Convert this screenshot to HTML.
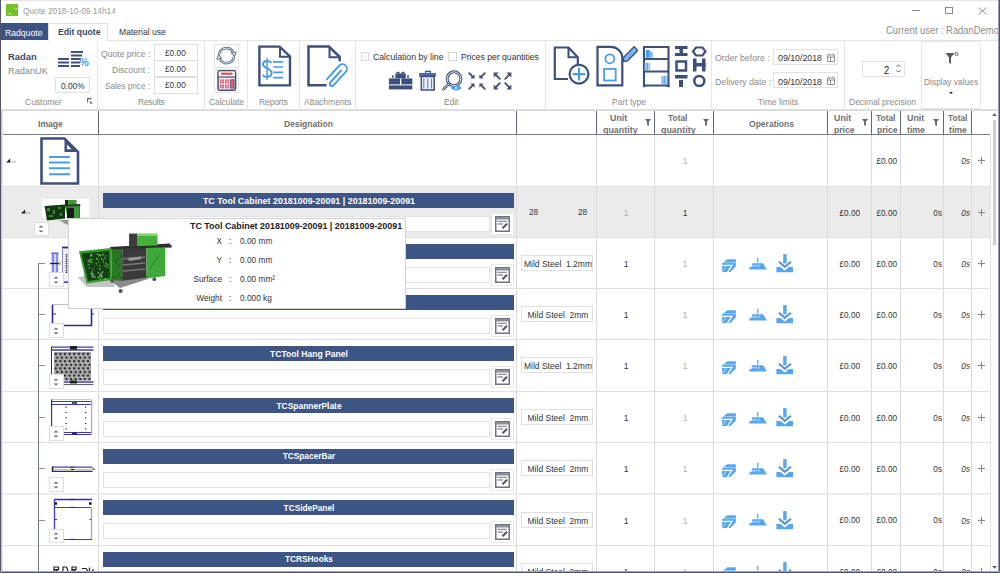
<!DOCTYPE html>
<html><head><meta charset="utf-8">
<style>
*{margin:0;padding:0;box-sizing:border-box}
html,body{width:1000px;height:573px;overflow:hidden;background:#fff;font-family:"Liberation Sans",sans-serif;color:#333}
.a{position:absolute}
.t{position:absolute;white-space:nowrap;font-size:8.5px;line-height:8.5px}
.lb{color:#8a8a8a}
.sep{position:absolute;top:41px;width:1px;height:68px;background:#e6e6e6}
.box{position:absolute;border:1px solid #dedede;background:#fff}
.gtl{position:absolute;top:96.5px;white-space:nowrap;font-size:9.52px;line-height:9.52px;color:#8a8a8a;transform:scaleX(0.8929);transform-origin:0 0}
</style></head><body>
<!-- window borders -->
<div class="a" style="left:0;top:0;width:1000px;height:1px;background:#e6e2ee"></div>

<!-- title -->
<svg class="a" style="left:6px;top:4px" width="12" height="12"><rect width="12" height="12" fill="#72c224"/><path d="M8 3.5L9.5 5.5L11 4M2 10L4 9L6 11" stroke="#c8f0a0" stroke-width="1" fill="none"/></svg>
<div class="t" style="left:23px;top:6.74px;font-size:9.30px;line-height:9.30px;color:#9a9a9a;transform:scaleX(0.8929);transform-origin:0 0">Quote 2018-10-09 14h14</div>
<div class="a" style="left:912px;top:10px;width:8px;height:1px;background:#888"></div>
<div class="a" style="left:945px;top:7px;width:8px;height:7px;border:1px solid #888"></div>
<svg class="a" style="left:978px;top:6.5px" width="9" height="8"><path d="M0.5 0.5L8.5 7.5M8.5 0.5L0.5 7.5" stroke="#888" stroke-width="0.9"/></svg>

<!-- tabs -->
<div class="a" style="left:0;top:23px;width:48px;height:17px;background:#3b5283"></div>
<div class="t" style="left:5px;top:27.73px;font-size:9.69px;line-height:9.69px;color:#fff;transform:scaleX(0.8929);transform-origin:0 0">Radquote</div>
<div class="a" style="left:48px;top:23px;width:60px;height:18px;border:1px solid #e0e0e0;border-bottom:none;background:#fff"></div>
<div class="t" style="left:57.5px;top:27.23px;font-size:9.74px;line-height:9.74px;color:#3b465e;font-weight:bold;transform:scaleX(0.8929);transform-origin:0 0">Edit quote</div>
<div class="t" style="left:118.8px;top:27.23px;font-size:9.63px;line-height:9.63px;color:#333;transform:scaleX(0.8929);transform-origin:0 0">Material use</div>
<div class="t" style="left:885.5px;top:25.3px;font-size:10.54px;line-height:10.54px;color:#8c8c8c;transform:scaleX(0.8929);transform-origin:0 0">Current user : RadanDemo</div>

<!-- ribbon -->
<div class="a" style="left:108px;top:40px;width:892px;height:1px;background:#e4e4e4"></div>
<div class="a" style="left:0;top:109px;width:1000px;height:2px;background:#dcdcdc"></div>
<div class="sep" style="left:97px"></div>
<div class="sep" style="left:204px"></div>
<div class="sep" style="left:247px"></div>
<div class="sep" style="left:299px"></div>
<div class="sep" style="left:355px"></div>
<div class="sep" style="left:545px"></div>
<div class="sep" style="left:711px"></div>
<div class="sep" style="left:844px"></div>

<!-- Customer -->
<div class="t" style="left:8px;top:51.8px;font-size:9.9px;line-height:9.9px;color:#3d4a6b;font-weight:bold;transform:scaleX(0.95);transform-origin:0 0">Radan</div>
<div class="t" style="left:8px;top:65.9px;font-size:9.9px;line-height:9.9px;color:#8a8a8a;transform:scaleX(0.93);transform-origin:0 0">RadanUK</div>
<svg class="a" style="left:57px;top:50px" width="33" height="19">
<g fill="#3d4f7c"><rect x="1" y="8" width="11" height="2"/><rect x="1" y="11.5" width="11" height="2"/><rect x="1" y="15" width="11" height="2"/>
<rect x="14" y="1" width="12" height="2"/><rect x="14" y="4.5" width="11" height="2"/><rect x="14" y="8" width="10" height="2"/><rect x="14" y="11.5" width="9" height="2"/><rect x="14" y="15" width="9" height="2"/></g>
<text x="22.5" y="15.5" font-family="Liberation Sans" font-size="10.5" font-weight="bold" fill="#4a9be8">%</text>
</svg>
<div class="box" style="left:55px;top:77px;width:34.5px;height:16px"></div>
<div class="t" style="left:60.7px;top:81.84px;font-size:9.30px;line-height:9.30px;color:#333;transform:scaleX(0.8929);transform-origin:0 0">0.00%</div>
<div class="gtl" style="left:25px">Customer</div>
<svg class="a" style="left:87px;top:98px" width="7" height="6"><path d="M0.6 4.5V0.6H4.5" stroke="#666" fill="none" stroke-width="1.1"/><path d="M2.5 2.5L5.8 5.6H3.2V3.5Z" fill="#333"/></svg>

<!-- Results -->
<div class="t lb" style="left:100.6px;top:49.03px;font-size:9.63px;line-height:9.63px;transform:scaleX(0.8929);transform-origin:0 0">Quote price :</div>
<div class="t lb" style="left:112.3px;top:64.84px;font-size:9.52px;line-height:9.52px;transform:scaleX(0.8929);transform-origin:0 0">Discount :</div>
<div class="t lb" style="left:105px;top:81.84px;font-size:9.18px;line-height:9.18px;transform:scaleX(0.8929);transform-origin:0 0">Sales price :</div>
<div class="box" style="left:154px;top:43.5px;width:44px;height:17px"></div>
<div class="box" style="left:154px;top:60px;width:44px;height:17px"></div>
<div class="box" style="left:154px;top:76.5px;width:44px;height:17px"></div>
<div class="t" style="left:165.4px;top:49.04px;font-size:9.30px;line-height:9.30px;transform:scaleX(0.8929);transform-origin:0 0">£0.00</div>
<div class="t" style="left:165.4px;top:65.14px;font-size:9.30px;line-height:9.30px;transform:scaleX(0.8929);transform-origin:0 0">£0.00</div>
<div class="t" style="left:165.4px;top:81.44px;font-size:9.30px;line-height:9.30px;transform:scaleX(0.8929);transform-origin:0 0">£0.00</div>
<div class="gtl" style="left:137.9px;letter-spacing:-0.28px">Results</div>

<!-- Calculate -->
<div class="box" style="left:214px;top:43.5px;width:25px;height:24px;border-color:#e4e4e4"></div>
<div class="box" style="left:214px;top:68.5px;width:25px;height:24.5px;border-color:#e4e4e4"></div>
<svg class="a" style="left:215px;top:46px" width="23" height="20" viewBox="0 0 23 20">
<path d="M4.02 8.28A7.6 7.6 0 0 1 18.2 6.2" stroke="#56648a" stroke-width="2.6" fill="none"/>
<path d="M4.02 8.28A7.6 7.6 0 0 1 18.2 6.2" stroke="#dfe4ee" stroke-width="1" fill="none"/>
<path d="M18.98 10.92A7.6 7.6 0 0 1 4.8 13" stroke="#56648a" stroke-width="2.6" fill="none"/>
<path d="M18.98 10.92A7.6 7.6 0 0 1 4.8 13" stroke="#dfe4ee" stroke-width="1" fill="none"/>
<path d="M15.6 6.6L21.8 5.4L19.6 11.6Z" fill="#56648a"/><path d="M17 7L20.6 6.4L19.4 9.8Z" fill="#dfe4ee"/>
<path d="M7.4 12.4L1.2 13.6L3.4 7.4Z" fill="#56648a"/><path d="M6 12L2.4 12.6L3.6 9.2Z" fill="#dfe4ee"/>
</svg>
<svg class="a" style="left:216.5px;top:70.3px" width="20" height="21" viewBox="0 0 20 21">
<rect x="1" y="0.8" width="17.6" height="19.4" rx="1.6" stroke="#3d4f7c" stroke-width="1.5" fill="#fbe6e8"/>
<rect x="1.8" y="1.6" width="16" height="5.2" fill="#fff"/>
<rect x="4" y="2.6" width="11.5" height="2.3" fill="#e0566a"/>
<path d="M1 7H18.6" stroke="#3d4f7c" stroke-width="1.2"/>
<g fill="#e86070"><rect x="2.8" y="9.5" width="4.2" height="3.8"/><rect x="8" y="9.5" width="4.2" height="3.8"/><rect x="2.8" y="14.5" width="4.2" height="3.8"/><rect x="8" y="14.5" width="4.2" height="3.8"/></g>
<g fill="#fff"><rect x="4.2" y="10.7" width="1.4" height="1.4"/><rect x="9.4" y="10.7" width="1.4" height="1.4"/><rect x="4.2" y="15.7" width="1.4" height="1.4"/><rect x="9.4" y="15.7" width="1.4" height="1.4"/></g>
<rect x="13.7" y="9.8" width="3.3" height="8.3" stroke="#3d4f7c" stroke-width="0.9" fill="#e86070"/>
</svg>
<div class="gtl" style="left:208.9px;letter-spacing:-0.06px">Calculate</div>

<!-- Reports -->
<svg class="a" style="left:257px;top:45px" width="36" height="43" viewBox="0 0 36 43">
<path d="M22.7 1.6H2.4V40.4H33V11.5Z" stroke="#3d4f7c" stroke-width="2.4" fill="#fff" stroke-linejoin="miter"/>
<path d="M23 1.6V11.8H33" stroke="#3d4f7c" stroke-width="2" fill="none"/>
<path d="M14.6 18C13 15.2 6.2 15 6 19.2C5.8 23.6 14.6 22.6 14.6 28C14.6 33 7.2 32.6 5.6 30" stroke="#4a9be8" stroke-width="2" fill="none"/>
<path d="M10.1 13V35" stroke="#4a9be8" stroke-width="1.5"/>
<path d="M16.2 16.9H26.2M16.2 22H26.2M16.2 27.4H26.2M16.2 32.6H26.2" stroke="#4a9be8" stroke-width="1.7"/>
</svg>
<div class="gtl" style="left:258.8px;letter-spacing:-0.13px">Reports</div>

<!-- Attachments -->
<svg class="a" style="left:306px;top:45px" width="44" height="43" viewBox="0 0 44 43">
<path d="M20.6 40.2H2.5V1.5H22.8L33.7 11.8V16.2" stroke="#3d4f7c" stroke-width="2.5" fill="none" stroke-linejoin="miter"/>
<path d="M23.5 1.4V12.3H33.7" stroke="#3d4f7c" stroke-width="2" fill="none"/>
<g transform="translate(31 29) rotate(42)"><path d="M-4 11.5V-7.5A4.5 4.5 0 0 1 5 -7.5V10.8A2.15 2.15 0 0 1 0.7 10.8V-6" stroke="#4a9be8" stroke-width="1.9" fill="none"/></g>
</svg>
<div class="gtl" style="left:303.8px">Attachments</div>

<!-- Edit -->
<div class="box" style="left:360.5px;top:52px;width:8.5px;height:8.5px;border-color:#d8d8d8"></div>
<div class="t" style="left:373.1px;top:52.43px;font-size:9.74px;line-height:9.74px;transform:scaleX(0.8929);transform-origin:0 0">Calculation by line</div>
<div class="box" style="left:448.2px;top:52px;width:8.5px;height:8.5px;border-color:#d8d8d8"></div>
<div class="t" style="left:460.9px;top:52.43px;font-size:9.63px;line-height:9.63px;transform:scaleX(0.8929);transform-origin:0 0">Prices per quantities</div>
<svg class="a" style="left:388px;top:71px" width="26" height="19" viewBox="0 0 26 19">
<g fill="#3d4f7c"><rect x="8.5" y="0.8" width="3" height="1.6"/><rect x="13.5" y="0.8" width="3" height="1.6"/><rect x="7.4" y="2.4" width="10.4" height="5"/>
<rect x="0.9" y="7.4" width="11.1" height="6"/><rect x="13.3" y="7.4" width="11" height="6"/><rect x="0.9" y="14.4" width="23.4" height="4"/></g>
<rect x="4" y="4.5" width="2" height="2" fill="#3d4f7c"/><rect x="19" y="4.5" width="2" height="2" fill="#3d4f7c"/>
</svg>
<svg class="a" style="left:418px;top:70px" width="19" height="21" viewBox="0 0 19 21">
<path d="M7.5 3.2V1.4H12.4V3.2" stroke="#3d4f7c" stroke-width="1.1" fill="#e4ecf8"/>
<rect x="1.6" y="3.3" width="16" height="3" fill="#4a6cae" stroke="#3d4f7c" stroke-width="0.6"/>
<path d="M3.3 6.6H16.2V20.1H3.3Z" stroke="#3d4f7c" stroke-width="1.5" fill="#eef3fb"/>
<path d="M5.8 8.5V18.5M9.75 8.5V18.5M13.5 8.5V18.5" stroke="#6f86b8" stroke-width="1.2"/>
</svg>
<svg class="a" style="left:441px;top:69px" width="23" height="23" viewBox="0 0 23 23">
<circle cx="13" cy="9.75" r="6.9" stroke="#3d4f7c" stroke-width="3" fill="#fff"/>
<circle cx="13" cy="9.75" r="6.9" stroke="#e8ecf4" stroke-width="1" fill="none"/>
<path d="M8.2 14.6L2.5 20.2" stroke="#3d4f7c" stroke-width="2.6" stroke-linecap="round"/>
<path d="M8.2 14.6L2.5 20.2" stroke="#f0f2f8" stroke-width="1" stroke-linecap="round"/>
<path d="M10 19C12.2 15.8 18.2 15.8 20.5 19C18.2 22.2 12.2 22.2 10 19Z" fill="#4a9be8"/>
<circle cx="15.2" cy="19" r="1.5" fill="#a8d4fa"/>
</svg>
<svg class="a" style="left:468px;top:72px" width="18" height="18" viewBox="0 0 18 18">
<g stroke="#465272" stroke-width="1.9" stroke-linecap="round"><path d="M1.2 1.2L5 5"/><path d="M16.8 1.2L13 5"/><path d="M1.2 16.8L5 13"/><path d="M16.8 16.8L13 13"/></g>
<g fill="#465272"><path d="M6.6 2.4V6.6H2.4Z"/><path d="M11.4 2.4V6.6H15.6Z"/><path d="M6.6 15.6V11.4H2.4Z"/><path d="M11.4 15.6V11.4H15.6Z"/></g>
</svg>
<svg class="a" style="left:492.5px;top:72px" width="19" height="18" viewBox="0 0 19 18">
<g stroke="#465272" stroke-width="1.9" stroke-linecap="round"><path d="M2.5 2.5L6.8 6.8"/><path d="M16.5 2.5L12.2 6.8"/><path d="M2.5 15.5L6.8 11.2"/><path d="M16.5 15.5L12.2 11.2"/></g>
<g fill="#465272"><path d="M0.6 0.6H5.6L0.6 5.6Z"/><path d="M18.4 0.6H13.4L18.4 5.6Z"/><path d="M0.6 17.4H5.6L0.6 12.4Z"/><path d="M18.4 17.4H13.4L18.4 12.4Z"/></g>
</svg>
<div class="gtl" style="left:444.3px;letter-spacing:-0.14px">Edit</div>

<!-- Part type -->
<svg class="a" style="left:553px;top:46px" width="37" height="40" viewBox="0 0 37 40">
<path d="M15 33H1.8V1.5H15.5L24.8 11.2V19" stroke="#3d4f7c" stroke-width="2.2" fill="none" stroke-linejoin="miter"/>
<path d="M15.5 1.5V11.2H24.8" stroke="#3d4f7c" stroke-width="2" fill="none"/>
<circle cx="26" cy="28.2" r="9.4" stroke="#3d4f7c" stroke-width="2.2" fill="#fff"/>
<path d="M26 21.8V34.6M19.6 28.2H32.4" stroke="#4a9be8" stroke-width="2.2"/>
</svg>
<svg class="a" style="left:596px;top:45px" width="42" height="43" viewBox="0 0 42 43">
<path d="M1.5 1.9H14.7A11.6 11 0 0 1 26.3 12.5V40.3H1.5Z" stroke="#3d4f7c" stroke-width="2.2" fill="#fff"/>
<circle cx="13.9" cy="13.8" r="4.5" stroke="#4a9be8" stroke-width="1.8" fill="none"/>
<rect x="8.1" y="23.9" width="11.6" height="11.6" stroke="#4a9be8" stroke-width="1.8" fill="none"/>
<g transform="translate(34.3 9.3) rotate(45)"><path d="M-2.6 -8V6.5L0 10L2.6 6.5V-8Z" stroke="#3d4f7c" stroke-width="1.4" fill="#8cc0f0"/><path d="M-0.9 -7V6M0.9 -7V6" stroke="#4a9be8" stroke-width="0.7"/></g>
</svg>
<svg class="a" style="left:642px;top:46px" width="29" height="42" viewBox="0 0 29 42">
<path d="M2 1H26.5V39.5H2Z" stroke="#3d4f7c" stroke-width="2.1" fill="#fff"/>
<path d="M2 13H26.5M2 25.5H26.5" stroke="#3d4f7c" stroke-width="2"/>
<rect x="1" y="39" width="2.6" height="2.2" fill="#3d4f7c"/><rect x="25" y="39" width="2.6" height="2.2" fill="#3d4f7c"/>
<rect x="4" y="4" width="3.8" height="7.8" fill="#4a9be8"/><rect x="7.8" y="5.5" width="2.8" height="6.3" fill="#7ab6ee"/>
<rect x="2.4" y="17" width="1.5" height="7.4" fill="#7ab6ee"/><rect x="4.4" y="17" width="1.5" height="7.4" fill="#4a9be8"/><rect x="6.4" y="17" width="1.4" height="7.4" fill="#7ab6ee"/>
<rect x="19.4" y="30" width="1.5" height="8.4" fill="#7ab6ee"/><rect x="21.4" y="30" width="1.5" height="8.4" fill="#4a9be8"/><rect x="23.4" y="30" width="1.4" height="8.4" fill="#7ab6ee"/>
</svg>
<svg class="a" style="left:675px;top:46px" width="13" height="41" viewBox="0 0 13 41">
<g fill="#3d4f7c"><rect x="0" y="0" width="12.5" height="3"/><rect x="4.5" y="2" width="3.5" height="6"/><rect x="0" y="7" width="12.5" height="3"/>
<rect x="4" y="34" width="4" height="7"/><rect x="0" y="29" width="12.5" height="3.5"/></g>
<rect x="1.5" y="15.5" width="9.5" height="9" stroke="#3d4f7c" stroke-width="2.5" fill="none"/>
</svg>
<svg class="a" style="left:692px;top:46px" width="15" height="41" viewBox="0 0 15 41">
<path d="M4 1.5H10.5L13.5 5.5L10.5 9.5H4L1 5.5Z" stroke="#3d4f7c" stroke-width="2.2" fill="none"/>
<g fill="#3d4f7c"><rect x="1" y="12.5" width="3.5" height="13"/><rect x="10" y="12.5" width="3.5" height="13"/><rect x="1" y="17" width="12.5" height="3.5"/></g>
<circle cx="7.3" cy="35" r="5" stroke="#3d4f7c" stroke-width="2.5" fill="none"/>
</svg>
<div class="gtl" style="left:611.8px">Part type</div>

<!-- Time limits -->
<div class="t lb" style="left:714.8px;top:53.13px;font-size:9.86px;line-height:9.86px;transform:scaleX(0.8929);transform-origin:0 0">Order before :</div>
<div class="t lb" style="left:714.8px;top:76.53px;font-size:9.86px;line-height:9.86px;transform:scaleX(0.8929);transform-origin:0 0">Delivery date :</div>
<div class="box" style="left:773px;top:48.5px;width:64.5px;height:16px;border-color:#e2e2e2"></div>
<div class="box" style="left:773px;top:72.3px;width:64.5px;height:15.5px;border-color:#e2e2e2"></div>
<div class="t" style="left:777.6px;top:53.13px;font-size:9.86px;line-height:9.86px;transform:scaleX(0.8929);transform-origin:0 0">09/10/2018</div>
<div class="t" style="left:777.6px;top:76.53px;font-size:9.86px;line-height:9.86px;transform:scaleX(0.8929);transform-origin:0 0">09/10/2018</div>
<svg class="a" style="left:827px;top:52.5px" width="8" height="9" viewBox="0 0 8 9"><path d="M0.5 2H7.5V8.5H0.5Z M0.5 4H7.5 M3.5 4V8.5 M2 0.5V2 M6 0.5V2" stroke="#777" stroke-width="0.8" fill="none"/></svg>
<svg class="a" style="left:827px;top:76px" width="8" height="9" viewBox="0 0 8 9"><path d="M0.5 2H7.5V8.5H0.5Z M0.5 4H7.5 M3.5 4V8.5 M2 0.5V2 M6 0.5V2" stroke="#777" stroke-width="0.8" fill="none"/></svg>
<div class="gtl" style="left:757.7px">Time limits</div>

<!-- Decimal precision -->
<div class="box" style="left:861.5px;top:60.5px;width:43.5px;height:16px;border-color:#e2e2e2"></div>
<div class="t" style="left:883.8px;top:64.82px;font-size:10.53px;line-height:10.53px;color:#222;transform:scaleX(0.8929);transform-origin:0 0">2</div>
<svg class="a" style="left:896px;top:63.5px" width="5" height="9"><path d="M0.5 2.8L2.5 0.8L4.5 2.8M0.5 6.2L2.5 8.2L4.5 6.2" stroke="#444" stroke-width="0.9" fill="none"/></svg>
<div class="gtl" style="left:848.8px">Decimal precision</div>

<!-- Display values -->
<div class="box" style="left:920.5px;top:41px;width:60px;height:67.5px;border-color:#e6e6e6"></div>
<svg class="a" style="left:945px;top:52px" width="14" height="13" viewBox="0 0 14 13"><path d="M0.5 1H9.5L6 5.5V12L4 10.5V5.5Z" fill="#4d5a70"/><circle cx="11.5" cy="2" r="1.5" stroke="#4d5a70" stroke-width="0.9" fill="none"/></svg>
<div class="t lb" style="left:924px;top:77.44px;font-size:9.41px;line-height:9.41px;transform:scaleX(0.8929);transform-origin:0 0">Display values</div>
<svg class="a" style="left:948.5px;top:92px" width="4" height="2"><path d="M0 0H4L2 2Z" fill="#222"/></svg>


<div class="a" style="left:1px;top:187px;width:989px;height:50px;background:#ebebeb"></div>
<div class="a" style="left:98px;top:134px;width:1px;height:439px;background:#dadada"></div>
<div class="a" style="left:516px;top:134px;width:1px;height:439px;background:#dadada"></div>
<div class="a" style="left:596px;top:134px;width:1px;height:439px;background:#dadada"></div>
<div class="a" style="left:654px;top:134px;width:1px;height:439px;background:#dadada"></div>
<div class="a" style="left:713px;top:134px;width:1px;height:439px;background:#dadada"></div>
<div class="a" style="left:827px;top:134px;width:1px;height:439px;background:#dadada"></div>
<div class="a" style="left:871px;top:134px;width:1px;height:439px;background:#dadada"></div>
<div class="a" style="left:900px;top:134px;width:1px;height:439px;background:#dadada"></div>
<div class="a" style="left:943px;top:134px;width:1px;height:439px;background:#dadada"></div>
<div class="a" style="left:971px;top:134px;width:1px;height:439px;background:#dadada"></div>
<div class="a" style="left:990px;top:134px;width:1px;height:439px;background:#e2e2e2"></div>
<div class="a" style="left:1px;top:186px;width:989px;height:1px;background:#dfdfdf"></div>
<div class="a" style="left:1px;top:237px;width:989px;height:1px;background:#dfdfdf"></div>
<div class="a" style="left:1px;top:288px;width:989px;height:1px;background:#dfdfdf"></div>
<div class="a" style="left:1px;top:339px;width:989px;height:1px;background:#dfdfdf"></div>
<div class="a" style="left:1px;top:391px;width:989px;height:1px;background:#dfdfdf"></div>
<div class="a" style="left:1px;top:442px;width:989px;height:1px;background:#dfdfdf"></div>
<div class="a" style="left:1px;top:493px;width:989px;height:2px;background:#ececec"></div>
<div class="a" style="left:1px;top:545px;width:989px;height:1px;background:#dfdfdf"></div>
<div class="a" style="left:98px;top:111px;width:1px;height:23px;background:#62667a"></div>
<div class="a" style="left:516px;top:111px;width:1px;height:23px;background:#62667a"></div>
<div class="a" style="left:596px;top:111px;width:1px;height:23px;background:#62667a"></div>
<div class="a" style="left:654px;top:111px;width:1px;height:23px;background:#62667a"></div>
<div class="a" style="left:713px;top:111px;width:1px;height:23px;background:#62667a"></div>
<div class="a" style="left:827px;top:111px;width:1px;height:23px;background:#62667a"></div>
<div class="a" style="left:871px;top:111px;width:1px;height:23px;background:#62667a"></div>
<div class="a" style="left:900px;top:111px;width:1px;height:23px;background:#62667a"></div>
<div class="a" style="left:943px;top:111px;width:1px;height:23px;background:#62667a"></div>
<div class="a" style="left:971px;top:111px;width:1px;height:23px;background:#62667a"></div>
<div class="a" style="left:1px;top:134px;width:989px;height:1px;background:#767c8e"></div>
<div class="t" style="left:38.2px;top:119.06px;font-size:9.63px;line-height:9.63px;color:#707070;transform:scaleX(0.8929);transform-origin:0 0;font-weight:bold">Image</div>
<div class="t" style="left:284.1px;top:118.87px;font-size:9.59px;line-height:9.59px;color:#707070;transform:scaleX(0.8929);transform-origin:0 0;font-weight:bold">Designation</div>
<div class="t" style="left:610px;top:113.01px;font-size:9.91px;line-height:9.91px;color:#707070;transform:scaleX(0.8929);transform-origin:0 0;font-weight:bold">Unit</div>
<div class="t" style="left:602.7px;top:124.61px;font-size:9.97px;line-height:9.97px;color:#707070;transform:scaleX(0.8929);transform-origin:0 0;font-weight:bold">quantity</div>
<div class="t" style="left:667.7px;top:113.09px;font-size:9.41px;line-height:9.41px;color:#707070;transform:scaleX(0.8929);transform-origin:0 0;font-weight:bold">Total</div>
<div class="t" style="left:661.3px;top:124.61px;font-size:9.97px;line-height:9.97px;color:#707070;transform:scaleX(0.8929);transform-origin:0 0;font-weight:bold">quantity</div>
<div class="t" style="left:748.6px;top:118.87px;font-size:9.56px;line-height:9.56px;color:#707070;transform:scaleX(0.8929);transform-origin:0 0;font-weight:bold">Operations</div>
<div class="t" style="left:834px;top:113.01px;font-size:9.91px;line-height:9.91px;color:#707070;transform:scaleX(0.8929);transform-origin:0 0;font-weight:bold">Unit</div>
<div class="t" style="left:834px;top:124.66px;font-size:9.63px;line-height:9.63px;color:#707070;transform:scaleX(0.8929);transform-origin:0 0;font-weight:bold">price</div>
<div class="t" style="left:875.7px;top:113.09px;font-size:9.41px;line-height:9.41px;color:#707070;transform:scaleX(0.8929);transform-origin:0 0;font-weight:bold">Total</div>
<div class="t" style="left:877px;top:124.66px;font-size:9.63px;line-height:9.63px;color:#707070;transform:scaleX(0.8929);transform-origin:0 0;font-weight:bold">price</div>
<div class="t" style="left:907px;top:113.01px;font-size:9.91px;line-height:9.91px;color:#707070;transform:scaleX(0.8929);transform-origin:0 0;font-weight:bold">Unit</div>
<div class="t" style="left:907px;top:124.63px;font-size:9.80px;line-height:9.80px;color:#707070;transform:scaleX(0.8929);transform-origin:0 0;font-weight:bold">time</div>
<div class="t" style="left:947.7px;top:113.09px;font-size:9.41px;line-height:9.41px;color:#707070;transform:scaleX(0.8929);transform-origin:0 0;font-weight:bold">Total</div>
<div class="t" style="left:949.2px;top:124.63px;font-size:9.80px;line-height:9.80px;color:#707070;transform:scaleX(0.8929);transform-origin:0 0;font-weight:bold">time</div>
<svg class="a" style="left:645px;top:118.5px" width="6" height="7" viewBox="0 0 6 7"><path d="M0 0H6L3.9 2.8V7L2.1 6V2.8Z" fill="#5e6470"/></svg>
<svg class="a" style="left:703px;top:118.5px" width="6" height="7" viewBox="0 0 6 7"><path d="M0 0H6L3.9 2.8V7L2.1 6V2.8Z" fill="#5e6470"/></svg>
<svg class="a" style="left:861.5px;top:118.5px" width="6" height="7" viewBox="0 0 6 7"><path d="M0 0H6L3.9 2.8V7L2.1 6V2.8Z" fill="#5e6470"/></svg>
<svg class="a" style="left:933px;top:118.5px" width="6" height="7" viewBox="0 0 6 7"><path d="M0 0H6L3.9 2.8V7L2.1 6V2.8Z" fill="#5e6470"/></svg>
<svg class="a" style="left:991px;top:112px" width="7" height="5"><path d="M1 4L3.5 1.2L6 4Z" fill="#606060"/></svg>
<div class="a" style="left:993px;top:120px;width:3px;height:125px;background:#cdcdcd"></div>
<svg class="a" style="left:991px;top:565px" width="7" height="5"><path d="M1 1L3.5 3.8L6 1Z" fill="#606060"/></svg>
<svg class="a" style="left:40px;top:136.5px" width="40" height="48" viewBox="0 0 40 48"><path d="M1.5 1.5H24.5L38 15V46.5H1.5Z" stroke="#3d4f7c" stroke-width="2.6" fill="#fff" stroke-linejoin="miter"/><path d="M24.5 1.5L38 15H24.5Z" fill="#3d4f7c"/><path d="M27 7.5L31.5 12.3H27Z" fill="#fff"/><g stroke="#4a9be8" stroke-width="2"><path d="M9 20H30M9 25.6H30M9 31.3H30M9 37.2H30"/></g></svg>
<svg class="a" style="left:6px;top:157.6px" width="11" height="5" viewBox="0 0 11 5"><path d="M0 4.6L4.2 0.6V4.6Z" fill="#1a1a1a"/><path d="M4.5 4H10" stroke="#888" stroke-width="0.9" stroke-dasharray="1.2 0.5"/></svg>
<svg class="a" style="left:20.5px;top:208.8px" width="11" height="5" viewBox="0 0 11 5"><path d="M0 4.6L4.2 0.6V4.6Z" fill="#1a1a1a"/><path d="M4.5 4H10" stroke="#888" stroke-width="0.9" stroke-dasharray="1.2 0.5"/></svg>
<div class="a" style="left:37.5px;top:263px;width:1px;height:310px;background:#6e7596"></div>
<div class="a" style="left:38px;top:263.0px;width:7px;height:1px;background:#8a90a8"></div>
<div class="a" style="left:38px;top:314.0px;width:7px;height:1px;background:#8a90a8"></div>
<div class="a" style="left:38px;top:365.0px;width:7px;height:1px;background:#8a90a8"></div>
<div class="a" style="left:38px;top:417.0px;width:7px;height:1px;background:#8a90a8"></div>
<div class="a" style="left:38px;top:468.0px;width:7px;height:1px;background:#8a90a8"></div>
<div class="a" style="left:38px;top:519.5px;width:7px;height:1px;background:#8a90a8"></div>
<div class="a" style="left:38px;top:571.0px;width:7px;height:1px;background:#8a90a8"></div>
<div class="a" style="left:103px;top:192.5px;width:411px;height:15px;background:#3d5585"></div>
<div class="t" style="left:158.5px;width:300px;text-align:center;top:196.01px;font-size:9.97px;line-height:9.97px;color:#fff;transform:scaleX(0.8929);transform-origin:50% 0;font-weight:bold">TC Tool Cabinet 20181009-20091 | 20181009-20091</div>
<div class="a" style="left:103px;top:215.6px;width:387px;height:16px;background:#fff;border:1px solid #e2e2e2"></div>
<div class="a" style="left:491.2px;top:213px;width:22.5px;height:22px;background:#fff;border:1px solid #e8e8e8"></div>
<svg class="a" style="left:494.8px;top:216px" width="15" height="16" viewBox="0 0 15 16"><rect x="0.75" y="0.75" width="13.5" height="14.5" stroke="#6e7480" stroke-width="1.5" fill="#fff"/><rect x="1" y="1" width="13" height="2.5" fill="#8a909a"/><path d="M2.5 5.3H11.8" stroke="#6e7480" stroke-width="1"/><path d="M2.5 8H8" stroke="#8a909a" stroke-width="1.4"/><path d="M7.5 12.2L12 7.8" stroke="#50586a" stroke-width="2.2"/></svg>
<div class="a" style="left:978px;top:212px;width:7px;height:1px;background:#858585"></div>
<div class="a" style="left:981px;top:209px;width:1px;height:7px;background:#858585"></div>
<div class="t" style="left:528.6px;top:207.93px;font-size:9.18px;line-height:9.18px;color:#333;transform:scaleX(0.8929);transform-origin:0 0">28</div>
<div class="t" style="left:577.6px;top:207.93px;font-size:9.18px;line-height:9.18px;color:#333;transform:scaleX(0.8929);transform-origin:0 0">28</div>
<div class="t" style="left:476.29999999999995px;width:300px;text-align:center;top:208.08px;font-size:9.52px;line-height:9.52px;color:#b0b0b0;transform:scaleX(0.8929);transform-origin:50% 0">1</div>
<div class="t" style="left:534.5px;width:300px;text-align:center;top:208.08px;font-size:9.52px;line-height:9.52px;color:#333;transform:scaleX(0.8929);transform-origin:50% 0">1</div>
<div class="t" style="left:560.4px;width:300px;text-align:right;top:208.53px;font-size:9.18px;line-height:9.18px;color:#333;transform:scaleX(0.8929);transform-origin:100% 0">£0.00</div>
<div class="t" style="left:596.8px;width:300px;text-align:right;top:208.53px;font-size:9.18px;line-height:9.18px;color:#333;transform:scaleX(0.8929);transform-origin:100% 0">£0.00</div>
<div class="t" style="left:641.6px;width:300px;text-align:right;top:208.53px;font-size:9.18px;line-height:9.18px;color:#333;transform:scaleX(0.8929);transform-origin:100% 0">0s</div>
<div class="t" style="left:670px;width:300px;text-align:right;top:209.13px;font-size:9.18px;line-height:9.18px;color:#333;transform:scaleX(0.8929);transform-origin:100% 0;font-style:italic">0s</div>
<div class="a" style="left:103px;top:243.5px;width:411px;height:15px;background:#3d5585"></div>
<div class="t" style="left:158.5px;width:300px;text-align:center;top:247.11px;font-size:9.30px;line-height:9.30px;color:#fff;transform:scaleX(0.8929);transform-origin:50% 0;font-weight:bold">TC Tool Cabinet</div>
<div class="a" style="left:103px;top:266.6px;width:387px;height:16px;background:#fff;border:1px solid #e2e2e2"></div>
<div class="a" style="left:491.2px;top:264px;width:22.5px;height:22px;background:#fff;border:1px solid #e8e8e8"></div>
<svg class="a" style="left:494.8px;top:267px" width="15" height="16" viewBox="0 0 15 16"><rect x="0.75" y="0.75" width="13.5" height="14.5" stroke="#6e7480" stroke-width="1.5" fill="#fff"/><rect x="1" y="1" width="13" height="2.5" fill="#8a909a"/><path d="M2.5 5.3H11.8" stroke="#6e7480" stroke-width="1"/><path d="M2.5 8H8" stroke="#8a909a" stroke-width="1.4"/><path d="M7.5 12.2L12 7.8" stroke="#50586a" stroke-width="2.2"/></svg>
<div class="a" style="left:978px;top:263px;width:7px;height:1px;background:#858585"></div>
<div class="a" style="left:981px;top:260px;width:1px;height:7px;background:#858585"></div>
<div class="a" style="left:521px;top:255.3px;width:72px;height:16px;background:#fff;border:1px solid #e0e0e0"></div>
<div class="t" style="left:407.5px;width:300px;text-align:center;top:259.48px;font-size:9.52px;line-height:9.52px;color:#333;transform:scaleX(0.8929);transform-origin:50% 0">Mild Steel&nbsp; 1.2mm</div>
<div class="t" style="left:476.29999999999995px;width:300px;text-align:center;top:259.08px;font-size:9.52px;line-height:9.52px;color:#333;transform:scaleX(0.8929);transform-origin:50% 0">1</div>
<div class="t" style="left:534.5px;width:300px;text-align:center;top:259.08px;font-size:9.52px;line-height:9.52px;color:#b0b0b0;transform:scaleX(0.8929);transform-origin:50% 0">1</div>
<svg class="a" style="left:721px;top:257.6px" width="16" height="15" viewBox="0 0 16 15"><path d="M6.4 1.2H14.8V8.5L9.4 13.9H1.2L1 5.4Z" fill="#55a6ee"/><path d="M2.5 4.6H14.8" stroke="#bfe0fb" stroke-width="0.7"/><path d="M1 7.3H11L6.3 14.3" stroke="#fff" stroke-width="1.2" fill="none"/><path d="M5.5 7.5L1.8 13" stroke="#d8ecfc" stroke-width="0.8"/></svg>
<svg class="a" style="left:745px;top:256.8px" width="24" height="14" viewBox="0 0 24 14"><rect x="11.9" y="0.8" width="1.7" height="4.8" fill="#7ab6ee"/><path d="M7.1 6.2H18.1L21.9 12.6H3.8L5.3 9.7H7.1Z" fill="#55a6ee"/><path d="M5.5 8.8H12.4" stroke="#c8e2fa" stroke-width="1"/><path d="M14.3 7.2L13.8 10.5" stroke="#c8e2fa" stroke-width="0.8"/></svg>
<svg class="a" style="left:776px;top:253.2px" width="18" height="20" viewBox="0 0 18 20"><rect x="7.2" y="1.1" width="3.4" height="9.3" fill="#55a6ee"/><path d="M2.9 8.8L8.8 13.8L15 8.8" stroke="#5a92d4" stroke-width="2.1" fill="none"/><path d="M0.4 14H4.6L8.8 17.6L13 14H17V19.3H0.4Z" fill="#55a6ee"/></svg>
<div class="t" style="left:560.4px;width:300px;text-align:right;top:259.53px;font-size:9.18px;line-height:9.18px;color:#333;transform:scaleX(0.8929);transform-origin:100% 0">£0.00</div>
<div class="t" style="left:596.8px;width:300px;text-align:right;top:259.53px;font-size:9.18px;line-height:9.18px;color:#333;transform:scaleX(0.8929);transform-origin:100% 0">£0.00</div>
<div class="t" style="left:641.6px;width:300px;text-align:right;top:259.53px;font-size:9.18px;line-height:9.18px;color:#333;transform:scaleX(0.8929);transform-origin:100% 0">0s</div>
<div class="t" style="left:670px;width:300px;text-align:right;top:260.13px;font-size:9.18px;line-height:9.18px;color:#333;transform:scaleX(0.8929);transform-origin:100% 0;font-style:italic">0s</div>
<div class="a" style="left:103px;top:294.5px;width:411px;height:15px;background:#3d5585"></div>
<div class="t" style="left:158.5px;width:300px;text-align:center;top:298.11px;font-size:9.30px;line-height:9.30px;color:#fff;transform:scaleX(0.8929);transform-origin:50% 0;font-weight:bold">TCBase</div>
<div class="a" style="left:103px;top:317.6px;width:387px;height:16px;background:#fff;border:1px solid #e2e2e2"></div>
<div class="a" style="left:491.2px;top:315px;width:22.5px;height:22px;background:#fff;border:1px solid #e8e8e8"></div>
<svg class="a" style="left:494.8px;top:318px" width="15" height="16" viewBox="0 0 15 16"><rect x="0.75" y="0.75" width="13.5" height="14.5" stroke="#6e7480" stroke-width="1.5" fill="#fff"/><rect x="1" y="1" width="13" height="2.5" fill="#8a909a"/><path d="M2.5 5.3H11.8" stroke="#6e7480" stroke-width="1"/><path d="M2.5 8H8" stroke="#8a909a" stroke-width="1.4"/><path d="M7.5 12.2L12 7.8" stroke="#50586a" stroke-width="2.2"/></svg>
<div class="a" style="left:978px;top:314px;width:7px;height:1px;background:#858585"></div>
<div class="a" style="left:981px;top:311px;width:1px;height:7px;background:#858585"></div>
<div class="a" style="left:521px;top:306.3px;width:72px;height:16px;background:#fff;border:1px solid #e0e0e0"></div>
<div class="t" style="left:407.5px;width:300px;text-align:center;top:310.48px;font-size:9.52px;line-height:9.52px;color:#333;transform:scaleX(0.8929);transform-origin:50% 0">Mild Steel&nbsp; 2mm</div>
<div class="t" style="left:476.29999999999995px;width:300px;text-align:center;top:310.08px;font-size:9.52px;line-height:9.52px;color:#333;transform:scaleX(0.8929);transform-origin:50% 0">1</div>
<div class="t" style="left:534.5px;width:300px;text-align:center;top:310.08px;font-size:9.52px;line-height:9.52px;color:#b0b0b0;transform:scaleX(0.8929);transform-origin:50% 0">1</div>
<svg class="a" style="left:721px;top:308.6px" width="16" height="15" viewBox="0 0 16 15"><path d="M6.4 1.2H14.8V8.5L9.4 13.9H1.2L1 5.4Z" fill="#55a6ee"/><path d="M2.5 4.6H14.8" stroke="#bfe0fb" stroke-width="0.7"/><path d="M1 7.3H11L6.3 14.3" stroke="#fff" stroke-width="1.2" fill="none"/><path d="M5.5 7.5L1.8 13" stroke="#d8ecfc" stroke-width="0.8"/></svg>
<svg class="a" style="left:745px;top:307.8px" width="24" height="14" viewBox="0 0 24 14"><rect x="11.9" y="0.8" width="1.7" height="4.8" fill="#7ab6ee"/><path d="M7.1 6.2H18.1L21.9 12.6H3.8L5.3 9.7H7.1Z" fill="#55a6ee"/><path d="M5.5 8.8H12.4" stroke="#c8e2fa" stroke-width="1"/><path d="M14.3 7.2L13.8 10.5" stroke="#c8e2fa" stroke-width="0.8"/></svg>
<svg class="a" style="left:776px;top:304.2px" width="18" height="20" viewBox="0 0 18 20"><rect x="7.2" y="1.1" width="3.4" height="9.3" fill="#55a6ee"/><path d="M2.9 8.8L8.8 13.8L15 8.8" stroke="#5a92d4" stroke-width="2.1" fill="none"/><path d="M0.4 14H4.6L8.8 17.6L13 14H17V19.3H0.4Z" fill="#55a6ee"/></svg>
<div class="t" style="left:560.4px;width:300px;text-align:right;top:310.53px;font-size:9.18px;line-height:9.18px;color:#333;transform:scaleX(0.8929);transform-origin:100% 0">£0.00</div>
<div class="t" style="left:596.8px;width:300px;text-align:right;top:310.53px;font-size:9.18px;line-height:9.18px;color:#333;transform:scaleX(0.8929);transform-origin:100% 0">£0.00</div>
<div class="t" style="left:641.6px;width:300px;text-align:right;top:310.53px;font-size:9.18px;line-height:9.18px;color:#333;transform:scaleX(0.8929);transform-origin:100% 0">0s</div>
<div class="t" style="left:670px;width:300px;text-align:right;top:311.13px;font-size:9.18px;line-height:9.18px;color:#333;transform:scaleX(0.8929);transform-origin:100% 0;font-style:italic">0s</div>
<div class="a" style="left:103px;top:345.5px;width:411px;height:15px;background:#3d5585"></div>
<div class="t" style="left:158.5px;width:300px;text-align:center;top:349.07px;font-size:9.58px;line-height:9.58px;color:#fff;transform:scaleX(0.8929);transform-origin:50% 0;font-weight:bold">TCTool Hang Panel</div>
<div class="a" style="left:103px;top:368.6px;width:387px;height:16px;background:#fff;border:1px solid #e2e2e2"></div>
<div class="a" style="left:491.2px;top:366px;width:22.5px;height:22px;background:#fff;border:1px solid #e8e8e8"></div>
<svg class="a" style="left:494.8px;top:369px" width="15" height="16" viewBox="0 0 15 16"><rect x="0.75" y="0.75" width="13.5" height="14.5" stroke="#6e7480" stroke-width="1.5" fill="#fff"/><rect x="1" y="1" width="13" height="2.5" fill="#8a909a"/><path d="M2.5 5.3H11.8" stroke="#6e7480" stroke-width="1"/><path d="M2.5 8H8" stroke="#8a909a" stroke-width="1.4"/><path d="M7.5 12.2L12 7.8" stroke="#50586a" stroke-width="2.2"/></svg>
<div class="a" style="left:978px;top:365px;width:7px;height:1px;background:#858585"></div>
<div class="a" style="left:981px;top:362px;width:1px;height:7px;background:#858585"></div>
<div class="a" style="left:521px;top:357.3px;width:72px;height:16px;background:#fff;border:1px solid #e0e0e0"></div>
<div class="t" style="left:407.5px;width:300px;text-align:center;top:361.48px;font-size:9.52px;line-height:9.52px;color:#333;transform:scaleX(0.8929);transform-origin:50% 0">Mild Steel&nbsp; 1.2mm</div>
<div class="t" style="left:476.29999999999995px;width:300px;text-align:center;top:361.08px;font-size:9.52px;line-height:9.52px;color:#333;transform:scaleX(0.8929);transform-origin:50% 0">1</div>
<div class="t" style="left:534.5px;width:300px;text-align:center;top:361.08px;font-size:9.52px;line-height:9.52px;color:#b0b0b0;transform:scaleX(0.8929);transform-origin:50% 0">1</div>
<svg class="a" style="left:721px;top:359.6px" width="16" height="15" viewBox="0 0 16 15"><path d="M6.4 1.2H14.8V8.5L9.4 13.9H1.2L1 5.4Z" fill="#55a6ee"/><path d="M2.5 4.6H14.8" stroke="#bfe0fb" stroke-width="0.7"/><path d="M1 7.3H11L6.3 14.3" stroke="#fff" stroke-width="1.2" fill="none"/><path d="M5.5 7.5L1.8 13" stroke="#d8ecfc" stroke-width="0.8"/></svg>
<svg class="a" style="left:745px;top:358.8px" width="24" height="14" viewBox="0 0 24 14"><rect x="11.9" y="0.8" width="1.7" height="4.8" fill="#7ab6ee"/><path d="M7.1 6.2H18.1L21.9 12.6H3.8L5.3 9.7H7.1Z" fill="#55a6ee"/><path d="M5.5 8.8H12.4" stroke="#c8e2fa" stroke-width="1"/><path d="M14.3 7.2L13.8 10.5" stroke="#c8e2fa" stroke-width="0.8"/></svg>
<svg class="a" style="left:776px;top:355.2px" width="18" height="20" viewBox="0 0 18 20"><rect x="7.2" y="1.1" width="3.4" height="9.3" fill="#55a6ee"/><path d="M2.9 8.8L8.8 13.8L15 8.8" stroke="#5a92d4" stroke-width="2.1" fill="none"/><path d="M0.4 14H4.6L8.8 17.6L13 14H17V19.3H0.4Z" fill="#55a6ee"/></svg>
<div class="t" style="left:560.4px;width:300px;text-align:right;top:361.53px;font-size:9.18px;line-height:9.18px;color:#333;transform:scaleX(0.8929);transform-origin:100% 0">£0.00</div>
<div class="t" style="left:596.8px;width:300px;text-align:right;top:361.53px;font-size:9.18px;line-height:9.18px;color:#333;transform:scaleX(0.8929);transform-origin:100% 0">£0.00</div>
<div class="t" style="left:641.6px;width:300px;text-align:right;top:361.53px;font-size:9.18px;line-height:9.18px;color:#333;transform:scaleX(0.8929);transform-origin:100% 0">0s</div>
<div class="t" style="left:670px;width:300px;text-align:right;top:362.13px;font-size:9.18px;line-height:9.18px;color:#333;transform:scaleX(0.8929);transform-origin:100% 0;font-style:italic">0s</div>
<div class="a" style="left:103px;top:397.5px;width:411px;height:15px;background:#3d5585"></div>
<div class="t" style="left:158.5px;width:300px;text-align:center;top:401.09px;font-size:9.46px;line-height:9.46px;color:#fff;transform:scaleX(0.8929);transform-origin:50% 0;font-weight:bold">TCSpannerPlate</div>
<div class="a" style="left:103px;top:420.6px;width:387px;height:16px;background:#fff;border:1px solid #e2e2e2"></div>
<div class="a" style="left:491.2px;top:418px;width:22.5px;height:22px;background:#fff;border:1px solid #e8e8e8"></div>
<svg class="a" style="left:494.8px;top:421px" width="15" height="16" viewBox="0 0 15 16"><rect x="0.75" y="0.75" width="13.5" height="14.5" stroke="#6e7480" stroke-width="1.5" fill="#fff"/><rect x="1" y="1" width="13" height="2.5" fill="#8a909a"/><path d="M2.5 5.3H11.8" stroke="#6e7480" stroke-width="1"/><path d="M2.5 8H8" stroke="#8a909a" stroke-width="1.4"/><path d="M7.5 12.2L12 7.8" stroke="#50586a" stroke-width="2.2"/></svg>
<div class="a" style="left:978px;top:417px;width:7px;height:1px;background:#858585"></div>
<div class="a" style="left:981px;top:414px;width:1px;height:7px;background:#858585"></div>
<div class="a" style="left:521px;top:409.3px;width:72px;height:16px;background:#fff;border:1px solid #e0e0e0"></div>
<div class="t" style="left:407.5px;width:300px;text-align:center;top:413.48px;font-size:9.52px;line-height:9.52px;color:#333;transform:scaleX(0.8929);transform-origin:50% 0">Mild Steel&nbsp; 2mm</div>
<div class="t" style="left:476.29999999999995px;width:300px;text-align:center;top:413.08px;font-size:9.52px;line-height:9.52px;color:#333;transform:scaleX(0.8929);transform-origin:50% 0">1</div>
<div class="t" style="left:534.5px;width:300px;text-align:center;top:413.08px;font-size:9.52px;line-height:9.52px;color:#b0b0b0;transform:scaleX(0.8929);transform-origin:50% 0">1</div>
<svg class="a" style="left:721px;top:411.6px" width="16" height="15" viewBox="0 0 16 15"><path d="M6.4 1.2H14.8V8.5L9.4 13.9H1.2L1 5.4Z" fill="#55a6ee"/><path d="M2.5 4.6H14.8" stroke="#bfe0fb" stroke-width="0.7"/><path d="M1 7.3H11L6.3 14.3" stroke="#fff" stroke-width="1.2" fill="none"/><path d="M5.5 7.5L1.8 13" stroke="#d8ecfc" stroke-width="0.8"/></svg>
<svg class="a" style="left:745px;top:410.8px" width="24" height="14" viewBox="0 0 24 14"><rect x="11.9" y="0.8" width="1.7" height="4.8" fill="#7ab6ee"/><path d="M7.1 6.2H18.1L21.9 12.6H3.8L5.3 9.7H7.1Z" fill="#55a6ee"/><path d="M5.5 8.8H12.4" stroke="#c8e2fa" stroke-width="1"/><path d="M14.3 7.2L13.8 10.5" stroke="#c8e2fa" stroke-width="0.8"/></svg>
<svg class="a" style="left:776px;top:407.2px" width="18" height="20" viewBox="0 0 18 20"><rect x="7.2" y="1.1" width="3.4" height="9.3" fill="#55a6ee"/><path d="M2.9 8.8L8.8 13.8L15 8.8" stroke="#5a92d4" stroke-width="2.1" fill="none"/><path d="M0.4 14H4.6L8.8 17.6L13 14H17V19.3H0.4Z" fill="#55a6ee"/></svg>
<div class="t" style="left:560.4px;width:300px;text-align:right;top:413.53px;font-size:9.18px;line-height:9.18px;color:#333;transform:scaleX(0.8929);transform-origin:100% 0">£0.00</div>
<div class="t" style="left:596.8px;width:300px;text-align:right;top:413.53px;font-size:9.18px;line-height:9.18px;color:#333;transform:scaleX(0.8929);transform-origin:100% 0">£0.00</div>
<div class="t" style="left:641.6px;width:300px;text-align:right;top:413.53px;font-size:9.18px;line-height:9.18px;color:#333;transform:scaleX(0.8929);transform-origin:100% 0">0s</div>
<div class="t" style="left:670px;width:300px;text-align:right;top:414.13px;font-size:9.18px;line-height:9.18px;color:#333;transform:scaleX(0.8929);transform-origin:100% 0;font-style:italic">0s</div>
<div class="a" style="left:103px;top:448.5px;width:411px;height:15px;background:#3d5585"></div>
<div class="t" style="left:158.5px;width:300px;text-align:center;top:452.11px;font-size:9.30px;line-height:9.30px;color:#fff;transform:scaleX(0.8929);transform-origin:50% 0;font-weight:bold">TCSpacerBar</div>
<div class="a" style="left:103px;top:471.6px;width:387px;height:16px;background:#fff;border:1px solid #e2e2e2"></div>
<div class="a" style="left:491.2px;top:469px;width:22.5px;height:22px;background:#fff;border:1px solid #e8e8e8"></div>
<svg class="a" style="left:494.8px;top:472px" width="15" height="16" viewBox="0 0 15 16"><rect x="0.75" y="0.75" width="13.5" height="14.5" stroke="#6e7480" stroke-width="1.5" fill="#fff"/><rect x="1" y="1" width="13" height="2.5" fill="#8a909a"/><path d="M2.5 5.3H11.8" stroke="#6e7480" stroke-width="1"/><path d="M2.5 8H8" stroke="#8a909a" stroke-width="1.4"/><path d="M7.5 12.2L12 7.8" stroke="#50586a" stroke-width="2.2"/></svg>
<div class="a" style="left:978px;top:468px;width:7px;height:1px;background:#858585"></div>
<div class="a" style="left:981px;top:465px;width:1px;height:7px;background:#858585"></div>
<div class="a" style="left:521px;top:460.3px;width:72px;height:16px;background:#fff;border:1px solid #e0e0e0"></div>
<div class="t" style="left:407.5px;width:300px;text-align:center;top:464.48px;font-size:9.52px;line-height:9.52px;color:#333;transform:scaleX(0.8929);transform-origin:50% 0">Mild Steel&nbsp; 2mm</div>
<div class="t" style="left:476.29999999999995px;width:300px;text-align:center;top:464.08px;font-size:9.52px;line-height:9.52px;color:#333;transform:scaleX(0.8929);transform-origin:50% 0">1</div>
<div class="t" style="left:534.5px;width:300px;text-align:center;top:464.08px;font-size:9.52px;line-height:9.52px;color:#b0b0b0;transform:scaleX(0.8929);transform-origin:50% 0">1</div>
<svg class="a" style="left:721px;top:462.6px" width="16" height="15" viewBox="0 0 16 15"><path d="M6.4 1.2H14.8V8.5L9.4 13.9H1.2L1 5.4Z" fill="#55a6ee"/><path d="M2.5 4.6H14.8" stroke="#bfe0fb" stroke-width="0.7"/><path d="M1 7.3H11L6.3 14.3" stroke="#fff" stroke-width="1.2" fill="none"/><path d="M5.5 7.5L1.8 13" stroke="#d8ecfc" stroke-width="0.8"/></svg>
<svg class="a" style="left:745px;top:461.8px" width="24" height="14" viewBox="0 0 24 14"><rect x="11.9" y="0.8" width="1.7" height="4.8" fill="#7ab6ee"/><path d="M7.1 6.2H18.1L21.9 12.6H3.8L5.3 9.7H7.1Z" fill="#55a6ee"/><path d="M5.5 8.8H12.4" stroke="#c8e2fa" stroke-width="1"/><path d="M14.3 7.2L13.8 10.5" stroke="#c8e2fa" stroke-width="0.8"/></svg>
<svg class="a" style="left:776px;top:458.2px" width="18" height="20" viewBox="0 0 18 20"><rect x="7.2" y="1.1" width="3.4" height="9.3" fill="#55a6ee"/><path d="M2.9 8.8L8.8 13.8L15 8.8" stroke="#5a92d4" stroke-width="2.1" fill="none"/><path d="M0.4 14H4.6L8.8 17.6L13 14H17V19.3H0.4Z" fill="#55a6ee"/></svg>
<div class="t" style="left:560.4px;width:300px;text-align:right;top:464.53px;font-size:9.18px;line-height:9.18px;color:#333;transform:scaleX(0.8929);transform-origin:100% 0">£0.00</div>
<div class="t" style="left:596.8px;width:300px;text-align:right;top:464.53px;font-size:9.18px;line-height:9.18px;color:#333;transform:scaleX(0.8929);transform-origin:100% 0">£0.00</div>
<div class="t" style="left:641.6px;width:300px;text-align:right;top:464.53px;font-size:9.18px;line-height:9.18px;color:#333;transform:scaleX(0.8929);transform-origin:100% 0">0s</div>
<div class="t" style="left:670px;width:300px;text-align:right;top:465.13px;font-size:9.18px;line-height:9.18px;color:#333;transform:scaleX(0.8929);transform-origin:100% 0;font-style:italic">0s</div>
<div class="a" style="left:103px;top:500.0px;width:411px;height:15px;background:#3d5585"></div>
<div class="t" style="left:158.5px;width:300px;text-align:center;top:503.61px;font-size:9.30px;line-height:9.30px;color:#fff;transform:scaleX(0.8929);transform-origin:50% 0;font-weight:bold">TCSidePanel</div>
<div class="a" style="left:103px;top:523.1px;width:387px;height:16px;background:#fff;border:1px solid #e2e2e2"></div>
<div class="a" style="left:491.2px;top:520.5px;width:22.5px;height:22px;background:#fff;border:1px solid #e8e8e8"></div>
<svg class="a" style="left:494.8px;top:523.5px" width="15" height="16" viewBox="0 0 15 16"><rect x="0.75" y="0.75" width="13.5" height="14.5" stroke="#6e7480" stroke-width="1.5" fill="#fff"/><rect x="1" y="1" width="13" height="2.5" fill="#8a909a"/><path d="M2.5 5.3H11.8" stroke="#6e7480" stroke-width="1"/><path d="M2.5 8H8" stroke="#8a909a" stroke-width="1.4"/><path d="M7.5 12.2L12 7.8" stroke="#50586a" stroke-width="2.2"/></svg>
<div class="a" style="left:978px;top:519.5px;width:7px;height:1px;background:#858585"></div>
<div class="a" style="left:981px;top:516.5px;width:1px;height:7px;background:#858585"></div>
<div class="a" style="left:521px;top:511.8px;width:72px;height:16px;background:#fff;border:1px solid #e0e0e0"></div>
<div class="t" style="left:407.5px;width:300px;text-align:center;top:515.98px;font-size:9.52px;line-height:9.52px;color:#333;transform:scaleX(0.8929);transform-origin:50% 0">Mild Steel&nbsp; 2mm</div>
<div class="t" style="left:476.29999999999995px;width:300px;text-align:center;top:515.58px;font-size:9.52px;line-height:9.52px;color:#333;transform:scaleX(0.8929);transform-origin:50% 0">1</div>
<div class="t" style="left:534.5px;width:300px;text-align:center;top:515.58px;font-size:9.52px;line-height:9.52px;color:#b0b0b0;transform:scaleX(0.8929);transform-origin:50% 0">1</div>
<svg class="a" style="left:721px;top:514.1px" width="16" height="15" viewBox="0 0 16 15"><path d="M6.4 1.2H14.8V8.5L9.4 13.9H1.2L1 5.4Z" fill="#55a6ee"/><path d="M2.5 4.6H14.8" stroke="#bfe0fb" stroke-width="0.7"/><path d="M1 7.3H11L6.3 14.3" stroke="#fff" stroke-width="1.2" fill="none"/><path d="M5.5 7.5L1.8 13" stroke="#d8ecfc" stroke-width="0.8"/></svg>
<svg class="a" style="left:745px;top:513.3px" width="24" height="14" viewBox="0 0 24 14"><rect x="11.9" y="0.8" width="1.7" height="4.8" fill="#7ab6ee"/><path d="M7.1 6.2H18.1L21.9 12.6H3.8L5.3 9.7H7.1Z" fill="#55a6ee"/><path d="M5.5 8.8H12.4" stroke="#c8e2fa" stroke-width="1"/><path d="M14.3 7.2L13.8 10.5" stroke="#c8e2fa" stroke-width="0.8"/></svg>
<svg class="a" style="left:776px;top:509.7px" width="18" height="20" viewBox="0 0 18 20"><rect x="7.2" y="1.1" width="3.4" height="9.3" fill="#55a6ee"/><path d="M2.9 8.8L8.8 13.8L15 8.8" stroke="#5a92d4" stroke-width="2.1" fill="none"/><path d="M0.4 14H4.6L8.8 17.6L13 14H17V19.3H0.4Z" fill="#55a6ee"/></svg>
<div class="t" style="left:560.4px;width:300px;text-align:right;top:516.03px;font-size:9.18px;line-height:9.18px;color:#333;transform:scaleX(0.8929);transform-origin:100% 0">£0.00</div>
<div class="t" style="left:596.8px;width:300px;text-align:right;top:516.03px;font-size:9.18px;line-height:9.18px;color:#333;transform:scaleX(0.8929);transform-origin:100% 0">£0.00</div>
<div class="t" style="left:641.6px;width:300px;text-align:right;top:516.03px;font-size:9.18px;line-height:9.18px;color:#333;transform:scaleX(0.8929);transform-origin:100% 0">0s</div>
<div class="t" style="left:670px;width:300px;text-align:right;top:516.63px;font-size:9.18px;line-height:9.18px;color:#333;transform:scaleX(0.8929);transform-origin:100% 0;font-style:italic">0s</div>
<div class="a" style="left:103px;top:551.5px;width:411px;height:15px;background:#3d5585"></div>
<div class="t" style="left:158.5px;width:300px;text-align:center;top:555.11px;font-size:9.30px;line-height:9.30px;color:#fff;transform:scaleX(0.8929);transform-origin:50% 0;font-weight:bold">TCRSHooks</div>
<div class="a" style="left:103px;top:574.6px;width:387px;height:16px;background:#fff;border:1px solid #e2e2e2"></div>
<div class="a" style="left:491.2px;top:572px;width:22.5px;height:22px;background:#fff;border:1px solid #e8e8e8"></div>
<svg class="a" style="left:494.8px;top:575px" width="15" height="16" viewBox="0 0 15 16"><rect x="0.75" y="0.75" width="13.5" height="14.5" stroke="#6e7480" stroke-width="1.5" fill="#fff"/><rect x="1" y="1" width="13" height="2.5" fill="#8a909a"/><path d="M2.5 5.3H11.8" stroke="#6e7480" stroke-width="1"/><path d="M2.5 8H8" stroke="#8a909a" stroke-width="1.4"/><path d="M7.5 12.2L12 7.8" stroke="#50586a" stroke-width="2.2"/></svg>
<div class="a" style="left:978px;top:571px;width:7px;height:1px;background:#858585"></div>
<div class="a" style="left:981px;top:568px;width:1px;height:7px;background:#858585"></div>
<div class="a" style="left:521px;top:563.3px;width:72px;height:16px;background:#fff;border:1px solid #e0e0e0"></div>
<div class="t" style="left:407.5px;width:300px;text-align:center;top:567.48px;font-size:9.52px;line-height:9.52px;color:#333;transform:scaleX(0.8929);transform-origin:50% 0">Mild Steel&nbsp; 2mm</div>
<div class="t" style="left:476.29999999999995px;width:300px;text-align:center;top:567.08px;font-size:9.52px;line-height:9.52px;color:#333;transform:scaleX(0.8929);transform-origin:50% 0">1</div>
<div class="t" style="left:534.5px;width:300px;text-align:center;top:567.08px;font-size:9.52px;line-height:9.52px;color:#b0b0b0;transform:scaleX(0.8929);transform-origin:50% 0">1</div>
<svg class="a" style="left:721px;top:565.6px" width="16" height="15" viewBox="0 0 16 15"><path d="M6.4 1.2H14.8V8.5L9.4 13.9H1.2L1 5.4Z" fill="#55a6ee"/><path d="M2.5 4.6H14.8" stroke="#bfe0fb" stroke-width="0.7"/><path d="M1 7.3H11L6.3 14.3" stroke="#fff" stroke-width="1.2" fill="none"/><path d="M5.5 7.5L1.8 13" stroke="#d8ecfc" stroke-width="0.8"/></svg>
<svg class="a" style="left:745px;top:564.8px" width="24" height="14" viewBox="0 0 24 14"><rect x="11.9" y="0.8" width="1.7" height="4.8" fill="#7ab6ee"/><path d="M7.1 6.2H18.1L21.9 12.6H3.8L5.3 9.7H7.1Z" fill="#55a6ee"/><path d="M5.5 8.8H12.4" stroke="#c8e2fa" stroke-width="1"/><path d="M14.3 7.2L13.8 10.5" stroke="#c8e2fa" stroke-width="0.8"/></svg>
<svg class="a" style="left:776px;top:561.2px" width="18" height="20" viewBox="0 0 18 20"><rect x="7.2" y="1.1" width="3.4" height="9.3" fill="#55a6ee"/><path d="M2.9 8.8L8.8 13.8L15 8.8" stroke="#5a92d4" stroke-width="2.1" fill="none"/><path d="M0.4 14H4.6L8.8 17.6L13 14H17V19.3H0.4Z" fill="#55a6ee"/></svg>
<div class="t" style="left:560.4px;width:300px;text-align:right;top:567.53px;font-size:9.18px;line-height:9.18px;color:#333;transform:scaleX(0.8929);transform-origin:100% 0">£0.00</div>
<div class="t" style="left:596.8px;width:300px;text-align:right;top:567.53px;font-size:9.18px;line-height:9.18px;color:#333;transform:scaleX(0.8929);transform-origin:100% 0">£0.00</div>
<div class="t" style="left:641.6px;width:300px;text-align:right;top:567.53px;font-size:9.18px;line-height:9.18px;color:#333;transform:scaleX(0.8929);transform-origin:100% 0">0s</div>
<div class="t" style="left:670px;width:300px;text-align:right;top:568.13px;font-size:9.18px;line-height:9.18px;color:#333;transform:scaleX(0.8929);transform-origin:100% 0;font-style:italic">0s</div>
<div class="t" style="left:535px;width:300px;text-align:center;top:156.08px;font-size:9.52px;line-height:9.52px;color:#b0b0b0;transform:scaleX(0.8929);transform-origin:50% 0">1</div>
<div class="t" style="left:596.8px;width:300px;text-align:right;top:156.53px;font-size:9.18px;line-height:9.18px;color:#333;transform:scaleX(0.8929);transform-origin:100% 0">£0.00</div>
<div class="t" style="left:670px;width:300px;text-align:right;top:157.13px;font-size:9.18px;line-height:9.18px;color:#333;transform:scaleX(0.8929);transform-origin:100% 0;font-style:italic">0s</div>
<div class="a" style="left:978px;top:160px;width:7px;height:1px;background:#858585"></div>
<div class="a" style="left:981px;top:157px;width:1px;height:7px;background:#858585"></div>
<div class="a" style="left:41.5px;top:198.8px;width:47.5px;height:18.7px;background:#fff"></div>
<svg class="a" style="left:41px;top:197px" width="48" height="28" viewBox="0 0 48 28"><path d="M18 23L26 28L31 23Z" fill="#9a9a9a"/><path d="M24 3H35.5V8H24Z" fill="#3f9a3a"/><path d="M24 3H27V8H24Z" fill="#222"/><path d="M24 8L39 7L39.5 9L24 10Z" fill="#222"/><path d="M24 9L39 8.5V22L27 23Z" fill="#2f7a2a"/><path d="M30 10L38 10V21L31 22Z" fill="#3b9a35"/><path d="M26 11H33V21H26Z" fill="#1a1a1a"/><path d="M3.5 9L24 7.5V21.5L6 23.5Z" fill="#123812"/><g fill="#3a8a30"><rect x="6" y="11" width="3" height="3"/><rect x="12" y="13" width="2" height="4"/><rect x="17" y="10" width="3" height="2"/><rect x="8" y="18" width="4" height="2"/><rect x="19" y="16" width="2" height="3"/></g></svg>
<svg class="a" style="left:49px;top:246px" width="20" height="38" viewBox="0 0 20 38"><rect x="2.3" y="6.8" width="7.2" height="20.2" fill="#d0d0fa"/><path d="M4 6.8V27M8 6.8V27" stroke="#5a5ad8" stroke-width="1.2"/><rect x="2.3" y="6.5" width="7.2" height="1.5" fill="#7070d0"/><path d="M1 17.5H10" stroke="#222" stroke-width="1.3"/><rect x="10" y="15" width="2.2" height="4.5" rx="1" fill="#c8e040"/><rect x="13" y="0.6" width="7" height="36" fill="#eef0ff"/><rect x="13" y="0.6" width="7" height="1.8" fill="#2a2aa0"/><path d="M13.5 3V36" stroke="#8080e0" stroke-width="0.9"/><rect x="13" y="35.5" width="7" height="1.4" fill="#2a2aa0"/><path d="M17.5 8V27" stroke="#333" stroke-width="1.6" stroke-dasharray="1.4 0.8"/></svg>
<svg class="a" style="left:51px;top:303px" width="43" height="24" viewBox="0 0 43 24"><path d="M1.5 1.5V22.5H40.5V5.5" stroke="#2a2a90" stroke-width="1.6" fill="none"/><path d="M1.5 1.5H17" stroke="#b0b0c8" stroke-width="0.8"/><path d="M2 11H5M40 11H43" stroke="#2a2a90" stroke-width="1"/></svg>
<svg class="a" style="left:51px;top:346px" width="43" height="40" viewBox="0 0 43 40"><path d="M0.5 0.5V39" stroke="#2a2a70" stroke-width="1"/><path d="M0.5 1.2H42.5" stroke="#3b3bb0" stroke-width="1.2"/><path d="M0.5 4H42.5" stroke="#3b3bb0" stroke-width="1.4"/><path d="M0.5 36H42.5" stroke="#3b3bb0" stroke-width="1.4"/><path d="M0.5 38.6H42.5" stroke="#555" stroke-width="1"/><rect x="3" y="6" width="37" height="28.5" fill="#a4a4a4"/><g fill="#2a2a2a"><circle cx="4.8" cy="8.0" r="1.15"/><circle cx="9.4" cy="8.0" r="1.15"/><circle cx="14.0" cy="8.0" r="1.15"/><circle cx="18.6" cy="8.0" r="1.15"/><circle cx="23.2" cy="8.0" r="1.15"/><circle cx="27.8" cy="8.0" r="1.15"/><circle cx="32.4" cy="8.0" r="1.15"/><circle cx="37.0" cy="8.0" r="1.15"/><circle cx="6.3" cy="11.6" r="1.15"/><circle cx="10.9" cy="11.6" r="1.15"/><circle cx="15.5" cy="11.6" r="1.15"/><circle cx="20.1" cy="11.6" r="1.15"/><circle cx="24.7" cy="11.6" r="1.15"/><circle cx="29.3" cy="11.6" r="1.15"/><circle cx="33.9" cy="11.6" r="1.15"/><circle cx="38.5" cy="11.6" r="1.15"/><circle cx="4.8" cy="15.2" r="1.15"/><circle cx="9.4" cy="15.2" r="1.15"/><circle cx="14.0" cy="15.2" r="1.15"/><circle cx="18.6" cy="15.2" r="1.15"/><circle cx="23.2" cy="15.2" r="1.15"/><circle cx="27.8" cy="15.2" r="1.15"/><circle cx="32.4" cy="15.2" r="1.15"/><circle cx="37.0" cy="15.2" r="1.15"/><circle cx="6.3" cy="18.8" r="1.15"/><circle cx="10.9" cy="18.8" r="1.15"/><circle cx="15.5" cy="18.8" r="1.15"/><circle cx="20.1" cy="18.8" r="1.15"/><circle cx="24.7" cy="18.8" r="1.15"/><circle cx="29.3" cy="18.8" r="1.15"/><circle cx="33.9" cy="18.8" r="1.15"/><circle cx="38.5" cy="18.8" r="1.15"/><circle cx="4.8" cy="22.4" r="1.15"/><circle cx="9.4" cy="22.4" r="1.15"/><circle cx="14.0" cy="22.4" r="1.15"/><circle cx="18.6" cy="22.4" r="1.15"/><circle cx="23.2" cy="22.4" r="1.15"/><circle cx="27.8" cy="22.4" r="1.15"/><circle cx="32.4" cy="22.4" r="1.15"/><circle cx="37.0" cy="22.4" r="1.15"/><circle cx="6.3" cy="26.0" r="1.15"/><circle cx="10.9" cy="26.0" r="1.15"/><circle cx="15.5" cy="26.0" r="1.15"/><circle cx="20.1" cy="26.0" r="1.15"/><circle cx="24.7" cy="26.0" r="1.15"/><circle cx="29.3" cy="26.0" r="1.15"/><circle cx="33.9" cy="26.0" r="1.15"/><circle cx="38.5" cy="26.0" r="1.15"/><circle cx="4.8" cy="29.6" r="1.15"/><circle cx="9.4" cy="29.6" r="1.15"/><circle cx="14.0" cy="29.6" r="1.15"/><circle cx="18.6" cy="29.6" r="1.15"/><circle cx="23.2" cy="29.6" r="1.15"/><circle cx="27.8" cy="29.6" r="1.15"/><circle cx="32.4" cy="29.6" r="1.15"/><circle cx="37.0" cy="29.6" r="1.15"/><circle cx="6.3" cy="33.2" r="1.15"/><circle cx="10.9" cy="33.2" r="1.15"/><circle cx="15.5" cy="33.2" r="1.15"/><circle cx="20.1" cy="33.2" r="1.15"/><circle cx="24.7" cy="33.2" r="1.15"/><circle cx="29.3" cy="33.2" r="1.15"/><circle cx="33.9" cy="33.2" r="1.15"/><circle cx="38.5" cy="33.2" r="1.15"/></g><g fill="#d8d8d8"><rect x="6.8" y="9.3" width="1" height="1"/><rect x="11.4" y="9.3" width="1" height="1"/><rect x="16.0" y="9.3" width="1" height="1"/><rect x="20.6" y="9.3" width="1" height="1"/><rect x="25.2" y="9.3" width="1" height="1"/><rect x="29.8" y="9.3" width="1" height="1"/><rect x="34.4" y="9.3" width="1" height="1"/><rect x="6.8" y="16.5" width="1" height="1"/><rect x="11.4" y="16.5" width="1" height="1"/><rect x="16.0" y="16.5" width="1" height="1"/><rect x="20.6" y="16.5" width="1" height="1"/><rect x="25.2" y="16.5" width="1" height="1"/><rect x="29.8" y="16.5" width="1" height="1"/><rect x="34.4" y="16.5" width="1" height="1"/><rect x="6.8" y="23.7" width="1" height="1"/><rect x="11.4" y="23.7" width="1" height="1"/><rect x="16.0" y="23.7" width="1" height="1"/><rect x="20.6" y="23.7" width="1" height="1"/><rect x="25.2" y="23.7" width="1" height="1"/><rect x="29.8" y="23.7" width="1" height="1"/><rect x="34.4" y="23.7" width="1" height="1"/><rect x="6.8" y="30.9" width="1" height="1"/><rect x="11.4" y="30.9" width="1" height="1"/><rect x="16.0" y="30.9" width="1" height="1"/><rect x="20.6" y="30.9" width="1" height="1"/><rect x="25.2" y="30.9" width="1" height="1"/><rect x="29.8" y="30.9" width="1" height="1"/><rect x="34.4" y="30.9" width="1" height="1"/></g><rect x="19" y="0" width="7" height="3.6" fill="#222"/><rect x="19" y="34.5" width="7" height="3" fill="#222"/></svg>
<svg class="a" style="left:51px;top:399px" width="42" height="38" viewBox="0 0 42 38"><path d="M0.5 0.5H40.5" stroke="#c8c8d0" stroke-width="1"/><path d="M0.5 2.5H41M0.5 5.5H41M0.5 33.5H41M0.5 35.5H41" stroke="#3a3ab0" stroke-width="1"/><path d="M0.6 0.5V31" stroke="#333" stroke-width="1.1"/><path d="M40.6 1V36" stroke="#b0b0b8" stroke-width="1.4"/><g fill="#222"><rect x="14.4" y="7.6" width="1.3" height="1.1"/><rect x="14.4" y="12.9" width="1.3" height="1.1"/><rect x="14.4" y="18.2" width="1.3" height="1.1"/><rect x="14.4" y="24" width="1.3" height="1.1"/><rect x="14.4" y="29.4" width="1.3" height="1.1"/><rect x="34" y="7.6" width="1.3" height="1.1"/><rect x="34" y="12.9" width="1.3" height="1.1"/><rect x="34" y="18.2" width="1.3" height="1.1"/><rect x="34" y="24" width="1.3" height="1.1"/><rect x="34" y="29.4" width="1.3" height="1.1"/></g><path d="M21 4H26M21 34.5H26" stroke="#222" stroke-width="1.4"/></svg>
<svg class="a" style="left:51px;top:465px" width="45" height="8" viewBox="0 0 45 8"><path d="M1.5 2.2H41.5" stroke="#4a40b0" stroke-width="1.3"/><path d="M1.5 6.4H41.5" stroke="#333" stroke-width="1.1"/><path d="M2 4.6H41" stroke="#8888d0" stroke-width="0.6"/><path d="M1.5 1.5V6.8" stroke="#222" stroke-width="1.5"/><path d="M41.5 3.5L43.5 4.5" stroke="#222" stroke-width="1.2"/><path d="M20 1.6V3.2M22 1.6V3.2M20 4.5H23" stroke="#222" stroke-width="1"/></svg>
<svg class="a" style="left:53px;top:498px" width="41" height="43" viewBox="0 0 41 43"><path d="M1 1.5H39" stroke="#3030a0" stroke-width="1.6"/><path d="M1 9.5H39" stroke="#4040c0" stroke-width="1"/><path d="M1.5 1V41" stroke="#4040c0" stroke-width="1.4"/><path d="M38.5 9V41.5" stroke="#a8a8b8" stroke-width="1.4"/><path d="M1 41.5H39" stroke="#4040c0" stroke-width="1"/><rect x="1.5" y="4.3" width="2.5" height="2.4" fill="#111"/><rect x="36" y="4.3" width="2.6" height="2.4" fill="#111"/><path d="M17 1.5H22M17 9.5H22M17 41.5H22" stroke="#222" stroke-width="1.1"/><path d="M2 21.5H4M36.5 21.5H38.5" stroke="#333" stroke-width="0.9"/></svg>
<svg class="a" style="left:52px;top:565px" width="43" height="7" viewBox="0 0 43 7"><g stroke="#222" stroke-width="1.2" fill="none"><path d="M2 7V2H6.5V4.5H3L7 7M11 7V2H14.5L16 6M20 7V2H24V4.5H21L24.5 7M30 3.5H34L36 6.5M37.5 6V2.5M41 7V4"/></g></svg>
<div class="a" style="left:34px;top:221.8px;width:14.5px;height:14px;background:#fff;border:1px solid #dcdcdc"></div>
<svg class="a" style="left:38.25px;top:225.3px" width="6" height="8" viewBox="0 0 6 8"><path d="M0.5 2.6L3 0.4L5.5 2.6ZM0.5 5.4L3 7.6L5.5 5.4Z" fill="#666"/></svg>
<div class="a" style="left:49px;top:272.2px;width:14.5px;height:14.5px;background:#fff;border:1px solid #dcdcdc"></div>
<svg class="a" style="left:53.25px;top:275.7px" width="6" height="8" viewBox="0 0 6 8"><path d="M0.5 2.6L3 0.4L5.5 2.6ZM0.5 5.4L3 7.6L5.5 5.4Z" fill="#666"/></svg>
<div class="a" style="left:49px;top:323.2px;width:14.5px;height:14.5px;background:#fff;border:1px solid #dcdcdc"></div>
<svg class="a" style="left:53.25px;top:326.7px" width="6" height="8" viewBox="0 0 6 8"><path d="M0.5 2.6L3 0.4L5.5 2.6ZM0.5 5.4L3 7.6L5.5 5.4Z" fill="#666"/></svg>
<div class="a" style="left:49px;top:374.2px;width:14.5px;height:14.5px;background:#fff;border:1px solid #dcdcdc"></div>
<svg class="a" style="left:53.25px;top:377.7px" width="6" height="8" viewBox="0 0 6 8"><path d="M0.5 2.6L3 0.4L5.5 2.6ZM0.5 5.4L3 7.6L5.5 5.4Z" fill="#666"/></svg>
<div class="a" style="left:49px;top:426.2px;width:14.5px;height:14.5px;background:#fff;border:1px solid #dcdcdc"></div>
<svg class="a" style="left:53.25px;top:429.7px" width="6" height="8" viewBox="0 0 6 8"><path d="M0.5 2.6L3 0.4L5.5 2.6ZM0.5 5.4L3 7.6L5.5 5.4Z" fill="#666"/></svg>
<div class="a" style="left:49px;top:477.2px;width:14.5px;height:14.5px;background:#fff;border:1px solid #dcdcdc"></div>
<svg class="a" style="left:53.25px;top:480.7px" width="6" height="8" viewBox="0 0 6 8"><path d="M0.5 2.6L3 0.4L5.5 2.6ZM0.5 5.4L3 7.6L5.5 5.4Z" fill="#666"/></svg>
<div class="a" style="left:49px;top:528.7px;width:14.5px;height:14.5px;background:#fff;border:1px solid #dcdcdc"></div>
<svg class="a" style="left:53.25px;top:532.2px" width="6" height="8" viewBox="0 0 6 8"><path d="M0.5 2.6L3 0.4L5.5 2.6ZM0.5 5.4L3 7.6L5.5 5.4Z" fill="#666"/></svg>
<div class="a" style="left:49px;top:580.2px;width:14.5px;height:14.5px;background:#fff;border:1px solid #dcdcdc"></div>
<svg class="a" style="left:53.25px;top:583.7px" width="6" height="8" viewBox="0 0 6 8"><path d="M0.5 2.6L3 0.4L5.5 2.6ZM0.5 5.4L3 7.6L5.5 5.4Z" fill="#666"/></svg>
<div class="a" style="left:68px;top:217.5px;width:338px;height:91.5px;background:#fff;border:1px solid #d0d0d0"></div>
<div class="t" style="left:189.5px;top:221.41px;font-size:9.97px;line-height:9.97px;color:#222;transform:scaleX(0.8929);transform-origin:0 0;font-weight:bold">TC Tool Cabinet 20181009-20091 | 20181009-20091</div>
<div class="t" style="left:-78px;width:300px;text-align:right;top:237.01px;font-size:9.30px;line-height:9.30px;color:#333;transform:scaleX(0.8929);transform-origin:100% 0">X</div>
<div class="t" style="left:228.5px;top:237.01px;font-size:9.30px;line-height:9.30px;color:#333;transform:scaleX(0.8929);transform-origin:0 0">:</div>
<div class="t" style="left:239.5px;top:237.01px;font-size:9.30px;line-height:9.30px;color:#333;transform:scaleX(0.8929);transform-origin:0 0">0.00 mm</div>
<div class="t" style="left:-78px;width:300px;text-align:right;top:256.01px;font-size:9.30px;line-height:9.30px;color:#333;transform:scaleX(0.8929);transform-origin:100% 0">Y</div>
<div class="t" style="left:228.5px;top:256.01px;font-size:9.30px;line-height:9.30px;color:#333;transform:scaleX(0.8929);transform-origin:0 0">:</div>
<div class="t" style="left:239.5px;top:256.01px;font-size:9.30px;line-height:9.30px;color:#333;transform:scaleX(0.8929);transform-origin:0 0">0.00 mm</div>
<div class="t" style="left:-78px;width:300px;text-align:right;top:275.01px;font-size:9.30px;line-height:9.30px;color:#333;transform:scaleX(0.8929);transform-origin:100% 0">Surface</div>
<div class="t" style="left:228.5px;top:275.01px;font-size:9.30px;line-height:9.30px;color:#333;transform:scaleX(0.8929);transform-origin:0 0">:</div>
<div class="t" style="left:239.5px;top:275.01px;font-size:9.30px;line-height:9.30px;color:#333;transform:scaleX(0.8929);transform-origin:0 0">0.00 mm²</div>
<div class="t" style="left:-78px;width:300px;text-align:right;top:293.81px;font-size:9.30px;line-height:9.30px;color:#333;transform:scaleX(0.8929);transform-origin:100% 0">Weight</div>
<div class="t" style="left:228.5px;top:293.81px;font-size:9.30px;line-height:9.30px;color:#333;transform:scaleX(0.8929);transform-origin:0 0">:</div>
<div class="t" style="left:239.5px;top:293.81px;font-size:9.30px;line-height:9.30px;color:#333;transform:scaleX(0.8929);transform-origin:0 0">0.000 kg</div>
<svg class="a" style="left:68px;top:218px" width="120" height="90" viewBox="0 0 120 90"><path d="M9.4 58.9L42.4 56.5L47.1 69L18.8 69Z" fill="#c4c4c4"/><path d="M43 58L78.5 55L80 61L52 70L44 64Z" fill="#8a8a8a"/><path d="M11 33.3L43.2 30.1L44 62L18.5 65.6Z" fill="#3a9a30"/><path d="M13.5 35.5L41.2 32.8L41.8 60L20 63Z" fill="#153f15"/><g fill="#52c040"><rect x="20.9" y="49.1" width="1.2" height="1.5"/><rect x="30.6" y="36.7" width="0.8" height="1.8"/><rect x="21.5" y="41.1" width="2.0" height="1.4"/><rect x="35.9" y="47.4" width="1.6" height="1.0"/><rect x="30.9" y="57.6" width="1.4" height="1.7"/><rect x="31.8" y="36.7" width="1.7" height="1.5"/><rect x="22.5" y="35.8" width="1.8" height="1.4"/><rect x="33.0" y="57.8" width="1.7" height="1.9"/><rect x="24.9" y="55.8" width="1.3" height="1.9"/><rect x="37.0" y="37.5" width="1.0" height="1.1"/><rect x="39.1" y="46.3" width="1.6" height="1.2"/><rect x="27.7" y="45.0" width="1.2" height="1.5"/><rect x="29.6" y="58.5" width="1.6" height="1.9"/><rect x="36.4" y="60.8" width="1.6" height="1.0"/><rect x="36.5" y="60.1" width="1.9" height="1.5"/><rect x="32.8" y="40.5" width="1.8" height="1.5"/><rect x="22.1" y="36.6" width="1.8" height="2.0"/><rect x="17.2" y="55.8" width="1.3" height="1.0"/><rect x="22.3" y="55.0" width="1.8" height="0.9"/><rect x="30.4" y="36.2" width="1.7" height="1.2"/><rect x="37.0" y="60.5" width="1.4" height="2.0"/><rect x="22.7" y="37.0" width="1.5" height="0.8"/><rect x="19.9" y="45.6" width="1.5" height="1.0"/><rect x="16.1" y="57.6" width="1.2" height="2.0"/><rect x="37.4" y="44.8" width="1.4" height="1.4"/><rect x="31.1" y="50.5" width="1.5" height="1.5"/><rect x="38.5" y="48.2" width="1.3" height="1.7"/><rect x="20.9" y="42.8" width="2.0" height="1.4"/><rect x="28.7" y="35.3" width="1.3" height="1.5"/><rect x="15.5" y="51.0" width="1.6" height="0.9"/><rect x="30.7" y="47.1" width="1.6" height="1.2"/><rect x="32.7" y="54.2" width="0.8" height="0.9"/><rect x="31.9" y="60.0" width="1.1" height="1.3"/><rect x="29.8" y="43.3" width="1.2" height="1.2"/><rect x="24.2" y="50.5" width="1.2" height="1.3"/><rect x="34.3" y="35.7" width="1.5" height="1.7"/><rect x="22.8" y="40.8" width="1.8" height="1.1"/><rect x="19.7" y="46.3" width="1.6" height="0.9"/><rect x="23.0" y="43.7" width="1.8" height="1.3"/><rect x="36.4" y="39.4" width="1.2" height="1.6"/><rect x="37.1" y="46.7" width="1.1" height="0.9"/><rect x="28.2" y="40.0" width="1.8" height="1.8"/><rect x="19.6" y="42.2" width="1.8" height="1.6"/><rect x="35.2" y="44.0" width="1.0" height="1.2"/><rect x="34.8" y="42.1" width="1.2" height="1.3"/></g><path d="M24 53V59H28M30 54L33 58L35 53" stroke="#c8e8c0" stroke-width="0.7" fill="none"/><path d="M43.2 30.6L54.2 30V62.8L44 62Z" fill="#2a7a24"/><g fill="#123a10"><rect x="48.1" y="43.5" width="1.2" height="1.2"/><rect x="52.3" y="36.4" width="1.2" height="1.2"/><rect x="44.5" y="58.4" width="1.2" height="1.2"/><rect x="52.0" y="59.6" width="1.2" height="1.2"/><rect x="48.2" y="58.6" width="1.2" height="1.2"/><rect x="52.4" y="38.2" width="1.2" height="1.2"/><rect x="50.8" y="55.4" width="1.2" height="1.2"/><rect x="50.1" y="46.5" width="1.2" height="1.2"/><rect x="47.0" y="41.5" width="1.2" height="1.2"/><rect x="46.4" y="33.9" width="1.2" height="1.2"/><rect x="49.5" y="40.0" width="1.2" height="1.2"/><rect x="51.4" y="33.3" width="1.2" height="1.2"/></g><path d="M54.2 30.5L78.5 29.5V59.7L54.2 62.8Z" fill="#3a3a3a"/><path d="M55 41L77 39M55 47L77 45M55 53L77 51" stroke="#777" stroke-width="1.3"/><path d="M60 40L72 38.6L74 41L61 43Z" fill="#9a9a9a"/><path d="M78.5 29.8L97.3 28.3V58.1L78.5 60.4Z" fill="#40a838"/><path d="M82 50L92 36" stroke="#2a7a22" stroke-width="0.8"/><path d="M41.6 29L102 25.6L102.8 29L44 31.4Z" fill="#2e2e2e"/><path d="M61.2 15.7H89.5V27.5L61.2 28.3Z" fill="#45b03c"/><path d="M61.2 15.7H69V28.2H61.2Z" fill="#3a3a3a"/><path d="M69 15.7H89.5V18H69Z" fill="#7fd070"/><rect x="97.3" y="27" width="6.3" height="2.6" fill="#333"/><circle cx="44" cy="62.8" r="1.9" fill="#555"/><circle cx="52.6" cy="73" r="2.1" fill="#555"/><circle cx="86.3" cy="61.2" r="1.9" fill="#555"/></svg>
<div class="a" style="left:1px;top:111px;width:1px;height:462px;background:#c4c4d0"></div><div class="a" style="left:2px;top:111px;width:1px;height:460px;background:#e4e4e8"></div><div class="a" style="left:0;top:0;width:1px;height:573px;background:#50546c"></div>
<div class="a" style="left:998px;top:0;width:1px;height:573px;background:#9a9cac"></div><div class="a" style="left:999px;top:0;width:1px;height:573px;background:#50526a"></div>
<div class="a" style="left:0;top:571px;width:1000px;height:1px;background:#a4a4b8"></div><div class="a" style="left:0;top:572px;width:1000px;height:1px;background:#4e5070"></div>
</body></html>
